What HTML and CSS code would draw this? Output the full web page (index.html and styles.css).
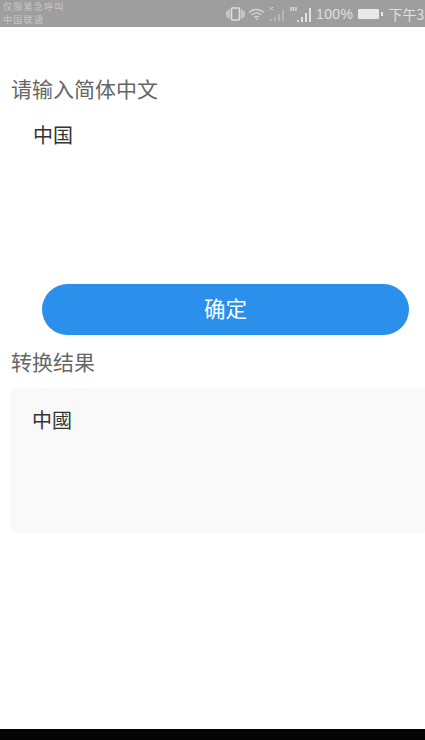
FILE: index.html
```html
<!DOCTYPE html>
<html lang="zh-CN">

<head>
    <meta charset="UTF-8">
    <meta name="viewport" content="width=device-width, initial-scale=1.0">
    <title>简体转繁体</title>
    <link rel="stylesheet" href="styles.css">
</head>

<body>
    <div class="screen">
        <div class="statusbar">
            <div class="carrier">
                <div>仅限紧急呼叫</div>
                <div>中国联通</div>
            </div>
            <div class="status-right">
                <!-- 振动 -->
                <svg class="ic" width="19" height="14" viewBox="0 0 19 14">
                    <rect x="5.5" y="1" width="8" height="12" rx="1" fill="none" stroke="#dedede" stroke-width="1.6" />
                    <path d="M1 4v6M3 2.5v9M16 2.5v9M18 4v6" stroke="#dedede" stroke-width="1.2" />
                </svg>
                <!-- wifi -->
                <svg class="ic wifi" width="17" height="12" viewBox="0 0 17 12">
                    <path d="M1 4.500C5.500 .5 11.500 .5 16 4.500M3.500 7C6.500 4.500 10.500 4.500 13.500 7M6 9.300C7.500 8.100 9.500 8.100 11 9.300" fill="none" stroke="#d4d4d4" stroke-width="1.300" />
                    <circle cx="8.500" cy="11" r="1" fill="#d4d4d4" />
                </svg>
                <!-- 无卡信号 -->
                <svg class="ic" width="18" height="16" viewBox="0 0 18 16">
                    <path d="M1 1l3 3M4 1L1 4" stroke="#d8d8d8" stroke-width="1" />
                    <path d="M2 15v-2M6 15v-4M10 15V8M14 15V4" stroke="#b8b8b8" stroke-width="1.800" />
                </svg>
                <!-- 信号 -->
                <svg class="ic" width="23" height="17" viewBox="0 0 23 17">
                    <path d="M1 1v4M3.500 1v4M6 1v4" stroke="#dedede" stroke-width="1.400" />
                    <path d="M8 16v-2M12 16v-5M16 16V7M20 16V2" stroke="#e0e0e0" stroke-width="2" />
                </svg>
                <span class="pct">100%</span>
                <!-- 电池 -->
                <svg class="ic batt" width="25" height="10" viewBox="0 0 25 10">
                    <rect width="21" height="10" rx="1" fill="#e8e8e8" />
                    <rect x="23" y="3" width="2" height="4" fill="#e8e8e8" />
                </svg>
                <span class="clock">下午3</span>
            </div>
        </div>

        <div class="content">
            <div class="label label-input">请输入简体中文</div>
            <div class="input-text">中国</div>
            <div class="btn">确定</div>
            <div class="label label-result">转换结果</div>
            <div class="result">中國</div>
        </div>

        <div class="navbar"></div>
    </div>
</body>

</html>
```

FILE: styles.css
```css
* {
    margin: 0;
    padding: 0;
    box-sizing: border-box;
}

body {
    font-family: "Noto Sans CJK SC", "Liberation Sans", sans-serif;
    background-color: #fff;
}

.screen {
    display: flex;
    flex-direction: column;
    width: 425px;
    height: 740px;
    overflow: hidden;
}

.statusbar {
    display: flex;
    justify-content: space-between;
    flex-shrink: 0;
    height: 27px;
    background-color: #9e9e9e;
    overflow: hidden;
}

.carrier {
    padding-left: 3px;
    font-size: 9px;
    letter-spacing: 1.3px;
    line-height: 13px;
    color: #c8c8c8;
}

.status-right {
    display: flex;
    align-items: center;
    flex-shrink: 0;
    width: 199px;
    padding-top: 1px;
    white-space: nowrap;
}

.ic {
    flex-shrink: 0;
    margin-right: 3px;
}

.wifi {
    margin-right: 4px;
}

.pct {
    font-family: "Liberation Sans", sans-serif;
    font-size: 14px;
    letter-spacing: 0.4px;
    color: #e0e0e0;
}

.batt {
    margin-left: 5px;
    margin-right: 5px;
}

.clock {
    font-size: 14px;
    color: #e0e0e0;
}

.content {
    flex: 1;
    padding-left: 11px;
}

.label {
    font-size: 21px;
    line-height: 26px;
    color: #666;
}

.label-input {
    margin-top: 48px;
}

.input-text {
    height: 164px;
    padding: 21px 0 0 22px;
    font-size: 20px;
    line-height: 26px;
    color: #333;
}

.btn {
    width: 367px;
    height: 51px;
    margin: 19px 0 0 31px;
    border-radius: 26px;
    background-color: #2b90ec;
    font-size: 21.5px;
    line-height: 47px;
    text-align: center;
    color: #fff;
}

.label-result {
    margin-top: 13px;
}

.result {
    height: 143px;
    margin-top: 14px;
    padding: 19px 0 0 21px;
    border-radius: 4px 0 0 4px;
    background-color: #f9f9f9;
    box-shadow: 0 1px 3px rgba(0, 0, 0, 0.05);
    font-size: 20px;
    line-height: 26px;
    color: #333;
}

.navbar {
    flex-shrink: 0;
    height: 11px;
    background-color: #050505;
}
```
